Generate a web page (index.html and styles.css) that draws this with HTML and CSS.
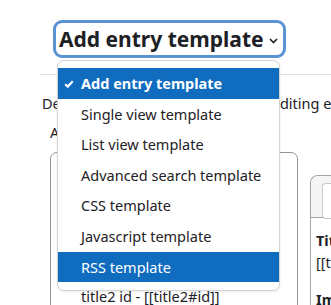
FILE: index.html
```html
<!DOCTYPE html>
<html lang="en">
  <head>
    <meta charset="UTF-8" />
    <meta name="viewport" content="width=device-width, initial-scale=1.0" />
    <title>Templates</title>
    <link rel="stylesheet" href="styles.css">
  </head>
  <body>
    <!-- Template selector -->
    <div class="header">
      <div class="select" id="template-select">
        <span class="select-label">Add entry template</span>
        <svg class="chevron" width="9" height="6" viewBox="0 0 9 6">
          <path d="M1 1 L4.5 4.5 L8 1" fill="none" stroke="#1d2125" stroke-width="1.6" />
        </svg>
      </div>
    </div>

    <div class="content">
      <p class="description">Defines the form when adding or editing entries.</p>
      <h3 class="tags-title">Available tags</h3>

      <div class="columns">
        <div class="tags-box">
          <ul class="tags-list">
            <li>title id - [[title#id]]</li>
            <li>title2 - [[title2]]</li>
            <li>title2 id - [[title2#id]]</li>
          </ul>
        </div>

        <div class="editor">
          <div class="toolbar">
            <div class="toolbar-group"></div>
          </div>
          <div class="editor-body">
            <p class="field-name">Title:</p>
            <p class="field-tag">[[title]]</p>
            <p class="field-name">Image:</p>
          </div>
        </div>
      </div>
    </div>

    <!-- Open dropdown menu -->
    <ul class="dropdown" id="template-menu">
      <li class="option active selected">
        <svg class="check" width="10" height="8" viewBox="0 0 10 8">
          <path d="M1.2 4.2 L3.8 6.6 L8.8 1.2" fill="none" stroke="white" stroke-width="2.2" />
        </svg>
        Add entry template
      </li>
      <li class="option">Single view template</li>
      <li class="option">List view template</li>
      <li class="option">Advanced search template</li>
      <li class="option">CSS template</li>
      <li class="option">Javascript template</li>
      <li class="option active">RSS template</li>
    </ul>
  </body>
</html>
```

FILE: styles.css
```css
body {
  margin: 0;
  padding: 0;
  height: 305px;
  overflow: hidden;
  background-color: white;
  color: #1d2125;
  font-family: "Noto Sans", "Open Sans", sans-serif;
  font-size: 14.5px;
}

.header {
  height: 74px;
  padding: 20px 0 0 53px;
  box-sizing: border-box;
}

.select {
  display: flex;
  align-items: center;
  width: 233px;
  height: 38px;
  box-sizing: border-box;
  padding: 0 5px 0 3px;
  border: 3px solid #5a93d4;
  border-radius: 9px;
  background-color: white;
}

.select-label {
  flex: 1;
  font-size: 21px;
  font-weight: bold;
  white-space: nowrap;
}

.chevron {
  margin-top: 3px;
}

.content {
  margin-left: 40px;
  border-top: 1px solid #dee2e6;
  padding: 17px 0 0 2px;
}

.description {
  margin: 0;
  line-height: 22px;
  white-space: nowrap;
}

.tags-title {
  margin: 7px 0 0 8px;
  font-size: 14.5px;
  font-weight: normal;
  line-height: 22px;
}

.columns {
  display: flex;
  gap: 12px;
  margin: 9px 0 0 8px;
}

.tags-box {
  width: 248px;
  flex-shrink: 0;
  height: 200px;
  border: 1px solid #8f959e;
  border-radius: 7px;
  box-sizing: border-box;
}

.tags-list {
  list-style: none;
  margin: 0;
  padding: 68px 0 0 30px;
}

.tags-list li {
  line-height: 30px;
  white-space: nowrap;
}

.editor {
  margin-top: 23px;
  flex: 1;
  height: 200px;
  border: 1px solid #a0a4aa;
  border-right: none;
  border-radius: 8px 0 0 0;
  overflow: hidden;
}

.toolbar {
  height: 42px;
  padding: 7px 0 0 11px;
  box-sizing: border-box;
  background-color: #f5f5f5;
  border-bottom: 1px solid #a0a4aa;
}

.toolbar-group {
  height: 34px;
  border: 1px solid #c8c8c8;
  border-right: none;
  border-radius: 4px 0 0 4px;
  background-color: white;
}

.editor-body {
  padding: 11px 0 0 5px;
}

.editor-body p {
  margin: 0;
  white-space: nowrap;
}

.field-name {
  font-weight: bold;
  line-height: 22px;
}

.field-tag {
  line-height: 22px;
  margin-bottom: 15px !important;
}

/* Dropdown menu of the select */
.dropdown {
  position: absolute;
  top: 60px;
  left: 57px;
  width: 223px;
  margin: 0;
  padding: 7px 0 8px 0;
  list-style: none;
  box-sizing: border-box;
  background-color: white;
  border: 1px solid #d4d4d4;
  border-radius: 7px;
  box-shadow: 0 1px 3px rgba(0, 0, 0, 0.08);
  z-index: 2;
}

.option {
  position: relative;
  height: 30.6px;
  line-height: 30.6px;
  padding-left: 23px;
  white-space: nowrap;
}

.option.active {
  background-color: #0f6cbf;
  color: white;
}

.option.selected {
  font-weight: bold;
}

.check {
  position: absolute;
  left: 6px;
  top: 12px;
}
```
